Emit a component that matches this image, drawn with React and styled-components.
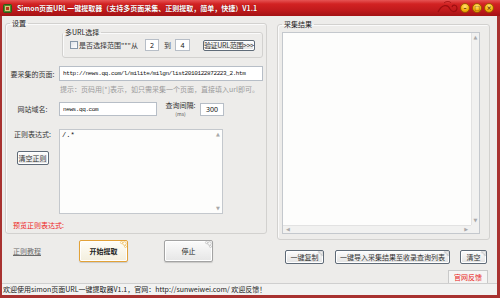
import React from 'react'
import styled, { createGlobalStyle } from 'styled-components'

const GlobalStyle = createGlobalStyle`
  html, body { margin: 0; padding: 0; }
  body {
    width: 500px;
    height: 298px;
    overflow: hidden;
    font-family: "Noto Sans CJK SC", "Noto Sans", sans-serif;
    font-size: 7px;
    color: #333;
  }
  * { box-sizing: border-box; }
`

const Window = styled.div`
  width: 500px;
  height: 298px;
  display: flex;
  flex-direction: column;
  background: #edecea;
  border-left: 2px solid #a83230;
  border-right: 3px solid #a83230;
  border-bottom: 3px solid #a83230;
`

const TitleBar = styled.div`
  height: 16px;
  flex: none;
  margin: 0 -3px 0 -2px;
  padding: 0 6px 0 3px;
  display: flex;
  align-items: center;
  position: relative;
  background: linear-gradient(#e65454 0, #d22222 25%, #c01a1c 65%, #a31214 100%);
`

const AppIcon = styled.svg`
  width: 9px;
  height: 9px;
  flex: none;
`

const Title = styled.div`
  margin-left: 5px;
  color: #fff;
  font-weight: 700;
  font-size: 7px;
  line-height: 16px;
  white-space: nowrap;
  text-shadow: 0 0 1px #6a0000;
`

const Swirl = styled.svg`
  position: absolute;
  right: 38px;
  top: 0;
  width: 26px;
  height: 16px;
`

const WinButtons = styled.div`
  margin-left: auto;
  display: flex;
  gap: 2px;
`

const WinButton = styled.div`
  width: 10px;
  height: 10px;
  border-radius: 50%;
  background: radial-gradient(circle at 50% 30%, #ffe27a 0, #f5b40c 55%, #d98a00 100%);
  border: 1px solid #9c5a00;
  display: flex;
  align-items: center;
  justify-content: center;
  color: #5a2a00;
  font-family: "DejaVu Sans", sans-serif;
  font-size: 6px;
  font-weight: 700;
  line-height: 1;
`

const Content = styled.div`
  flex: 1;
  min-height: 0;
  overflow: hidden;
  display: grid;
  grid-template-columns: 262px 1fr;
  column-gap: 10px;
  padding: 2px 7px 0 3px;
`

const Column = styled.div`
  display: flex;
  flex-direction: column;
`

const Group = styled.fieldset`
  margin: ${p => p.$top || 0}px 0 0 ${p => p.$left || 0}px;
  padding: ${p => p.$pad};
  border: 1px solid #d2d1cf;
  border-radius: 3px;
  box-shadow: inset 1px 1px 0 #fafafa;
  min-width: 0;
`

const Legend = styled.legend`
  padding: 0 2px;
  line-height: ${p => p.$lh || 10}px;
  font-size: 7px;
  color: #222;
`

const Row = styled.div`
  display: flex;
  align-items: ${p => p.$align || 'center'};
  margin-top: ${p => p.$top || 0}px;
  padding-left: ${p => p.$left || 0}px;
`

const Check = styled.span`
  width: 8px;
  height: 8px;
  border: 1px solid #8797a8;
  background: linear-gradient(135deg, #dfe3e8, #fff);
  flex: none;
`

const Text = styled.span`
  white-space: nowrap;
  margin-left: ${p => p.$left || 0}px;
  color: ${p => p.$color || '#333'};
  line-height: 10px;
`

const Input = styled.input`
  width: ${p => p.$w}px;
  height: ${p => p.$h || 14}px;
  margin: 0 0 0 ${p => p.$left || 0}px;
  padding: 0 0 0 ${p => (p.$align === 'center' ? 0 : 3)}px;
  border: 1px solid #b7bec7;
  background: #fff;
  font-family: ${p => (p.$mono ? '"Liberation Mono", monospace' : '"Noto Sans", sans-serif')};
  font-size: ${p => (p.$mono ? 6 : 7)}px;
  letter-spacing: ${p => (p.$mono ? '-0.4px' : 'normal')};
  color: #111;
  text-align: ${p => p.$align || 'left'};
  outline: none;
  flex: ${p => (p.$grow ? 1 : 'none')};
  min-width: 0;
`

const Button = styled.div`
  position: relative;
  width: ${p => p.$w}px;
  height: ${p => p.$h || 14}px;
  margin-left: ${p => p.$left || 0}px;
  flex: none;
  display: flex;
  align-items: center;
  justify-content: center;
  border: 1px solid #5f6b78;
  border-radius: 2px;
  background: linear-gradient(#fdfdfd, #e2e2e2);
  box-shadow: inset 0 0 0 1px #fff;
  color: #333;
  font-size: 7px;
  letter-spacing: ${p => (p.$tight ? '-0.3px' : 'normal')};
  white-space: nowrap;
  overflow: hidden;
`

const BigButton = styled(Button)`
  height: 22px;
  border: 1px solid ${p => (p.$primary ? '#e2a238' : '#a3a3a3')};
  background: ${p => (p.$primary ? 'linear-gradient(#fffef8, #f3eedd)' : 'linear-gradient(#fbfbfb, #e6e6e6)')};
  box-shadow: inset 0 0 0 1px #fff, 0 1px 1px rgba(0, 0, 0, 0.15);
  font-weight: ${p => (p.$primary ? 700 : 400)};
  color: #222;
`

const Curl = styled.svg`
  position: absolute;
  top: 0;
  right: 0;
  width: ${p => p.$size || 6}px;
  height: ${p => p.$size || 6}px;
`

const Label = styled.div`
  width: 45px;
  flex: none;
  text-align: center;
  line-height: 10px;
  margin-right: 4px;
  white-space: nowrap;
`

const LabelCol = styled.div`
  width: 45px;
  margin-right: 4px;
  display: flex;
  flex-direction: column;
  align-items: center;
  flex: none;
`

const Interval = styled.div`
  width: 31px;
  height: 16px;
  margin: -1px 0 -1px 8px;
  display: flex;
  flex-direction: column;
  align-items: center;
  white-space: nowrap;
`

const IntervalName = styled.span`
  line-height: 8px;
  height: 8px;
`

const Small = styled.span`
  margin-top: 2px;
  font-size: 5px;
  line-height: 6px;
  height: 6px;
  color: #555;
`

const Hint = styled.div`
  margin-top: 3px;
  padding-left: 50px;
  line-height: 10px;
  color: #9b9b9b;
  white-space: nowrap;
`

const Box = styled.div`
  width: ${p => (p.$w ? `${p.$w}px` : 'auto')};
  height: ${p => p.$h}px;
  margin-top: ${p => p.$top || 0}px;
  border: 1px solid #c4c8cd;
  background: #fdfdfc;
  display: grid;
  grid-template-columns: 1fr 8px;
  grid-template-rows: ${p => (p.$hscroll ? '1fr 8px' : '1fr')};
`

const BoxText = styled.div`
  padding: 1px 2px;
  font-family: "Liberation Mono", monospace;
  font-size: 7px;
  line-height: 9px;
  color: #111;
`

const VScroll = styled.div`
  display: flex;
  flex-direction: column;
  justify-content: space-between;
  align-items: center;
  padding: 2px 0;
  background: ${p => (p.$track ? '#f1f1f0' : 'transparent')};
  border-left: ${p => (p.$track ? '1px solid #e2e2e2' : 'none')};
`

const HScroll = styled.div`
  display: flex;
  justify-content: space-between;
  align-items: center;
  padding: 0 3px;
  background: #f1f1f0;
  border-top: 1px solid #e2e2e2;
`

const Corner = styled.div`
  background: #f1f1f0;
`

const Arrow = styled.span`
  font-family: "DejaVu Sans", sans-serif;
  font-size: 5px;
  line-height: 5px;
  color: #a9a9a9;
`

const Preview = styled.div`
  margin-top: 6px;
  padding-left: 3px;
  line-height: 10px;
  color: #ee2222;
`

const BottomRow = styled.div`
  display: flex;
  align-items: center;
  margin-top: 6px;
  padding-left: 8px;
`

const Tutorial = styled.span`
  color: #6b6b6b;
  text-decoration: underline;
  white-space: nowrap;
`

const Tab = styled.div`
  align-self: flex-end;
  margin: 6px 2px 0 0;
  width: 40px;
  height: 13px;
  border: 1px solid #c9c9c9;
  border-bottom: none;
  background: #f5f5f4;
  color: #e82020;
  display: flex;
  align-items: center;
  justify-content: center;
`

const StatusBar = styled.div`
  height: 12px;
  flex: none;
  border-top: 1px solid #cfcfcf;
  background: #f2f2f1;
  padding-left: 1px;
  line-height: 11px;
  white-space: nowrap;
  color: #222;
`

const Decor = ({ color, size }) => (
  <Curl $size={size} viewBox="0 0 8 8">
    <circle cx="5.5" cy="2.5" r="1.8" fill="none" stroke={color} strokeWidth="0.8" />
    <circle cx="2.5" cy="1.5" r="1.1" fill="none" stroke={color} strokeWidth="0.7" />
    <circle cx="6.5" cy="5.5" r="1" fill="none" stroke={color} strokeWidth="0.7" />
  </Curl>
)

export default function App() {
  return (
    <>
      <GlobalStyle />
      <Window>
        <TitleBar>
          <AppIcon viewBox="0 0 9 9">
            <rect x="0.5" y="0.5" width="8" height="8" rx="1" fill="#4f8a2a" stroke="#2d5a14" />
            <rect x="2" y="2" width="5" height="5" fill="#d9c37a" />
            <rect x="3" y="3" width="3" height="3" fill="#b23a1c" />
          </AppIcon>
          <Title>Simon页面URL一键提取器（支持多页面采集、正则提取，简单，快捷）V1.1</Title>
          <Swirl viewBox="0 0 26 16">
            <path d="M2 12 C6 4, 12 4, 14 9 C16 13, 21 12, 21 8 C21 5, 17 4, 16 7" fill="none" stroke="#9c0e10" strokeWidth="1.2" />
            <path d="M8 3 C10 1, 14 1, 15 3" fill="none" stroke="#9c0e10" strokeWidth="0.8" />
          </Swirl>
          <WinButtons>
            <WinButton>–</WinButton>
            <WinButton>□</WinButton>
            <WinButton>×</WinButton>
          </WinButtons>
        </TitleBar>

        <Content>
          <Column>
            <Group $pad="0 3px 3px 4px">
              <Legend>设置</Legend>
              <Group $left={52} $pad="0 0 6px 0">
                <Legend $lh={8}>多URL选择</Legend>
                <Row $top={3} $left={7}>
                  <Check />
                  <Text $left={1}>是否选择范围"*"从</Text>
                  <Input $w={14} $h={12} $left={7} $align="center" readOnly value="2" />
                  <Text $left={5}>到</Text>
                  <Input $w={15} $h={12} $left={4} $align="center" readOnly value="4" />
                  <Button $w={52} $h={11} $left={13} $tight>验证URL范围&gt;&gt;&gt;</Button>
                </Row>
              </Group>

              <Row $top={8}>
                <Label>要采集的页面:</Label>
                <Input $grow $h={15} $mono readOnly value="http://news.qq.com/l/milite/milgn/list2010122872223_2.htm" />
              </Row>

              <Hint>提示：页码用[*]表示，如只需采集一个页面，直接填入url即可。</Hint>

              <Row $top={8}>
                <Label>网站域名:</Label>
                <Input $w={98} $mono readOnly value="news.qq.com" />
                <Interval>
                  <IntervalName>查询间隔:</IntervalName>
                  <Small>(ms)</Small>
                </Interval>
                <Input $w={24} $h={13} $left={4} $align="center" readOnly value="300" />
              </Row>

              <Row $top={13} $align="flex-start">
                <LabelCol>
                  <Text>正则表达式:</Text>
                  <Button $w={32} style={{ marginTop: 12 }}>
                    清空正则
                  </Button>
                </LabelCol>
                <Box $w={164} $h={85}>
                  <BoxText>/.*</BoxText>
                  <VScroll>
                    <Arrow>▲</Arrow>
                    <Arrow>▼</Arrow>
                  </VScroll>
                </Box>
              </Row>

              <Preview>预览正则表达式:</Preview>
            </Group>

            <BottomRow>
              <Tutorial>正则教程</Tutorial>
              <BigButton $w={49} $left={38} $primary>
                开始提取
                <Decor color="#efc060" size={8} />
              </BigButton>
              <BigButton $w={49} $left={36}>
                停止
                <Decor color="#bdbdbd" size={8} />
              </BigButton>
            </BottomRow>
          </Column>

          <Column>
            <Group $top={1} $pad="0 9px 5px 4px">
              <Legend>采集结果</Legend>
              <Box $h={202} $top={3} $hscroll>
                <BoxText />
                <VScroll $track>
                  <Arrow>▲</Arrow>
                  <Arrow>▼</Arrow>
                </VScroll>
                <HScroll>
                  <Arrow>◀</Arrow>
                  <Arrow>▶</Arrow>
                </HScroll>
                <Corner />
              </Box>
            </Group>

            <Row $top={10} $left={8}>
              <Button $w={39}>
                一键复制
                <Decor color="#b5b5b5" />
              </Button>
              <Button $w={115} $left={11}>
                一键导入采集结果至收录查询列表
                <Decor color="#b5b5b5" />
              </Button>
              <Button $w={27} $left={10}>
                清空
                <Decor color="#b5b5b5" />
              </Button>
            </Row>

            <Tab>官网反馈</Tab>
          </Column>
        </Content>

        <StatusBar>欢迎使用simon页面URL一键提取器V1.1，官网：http://sunweiwei.com/ 欢迎反馈！</StatusBar>
      </Window>
    </>
  )
}
